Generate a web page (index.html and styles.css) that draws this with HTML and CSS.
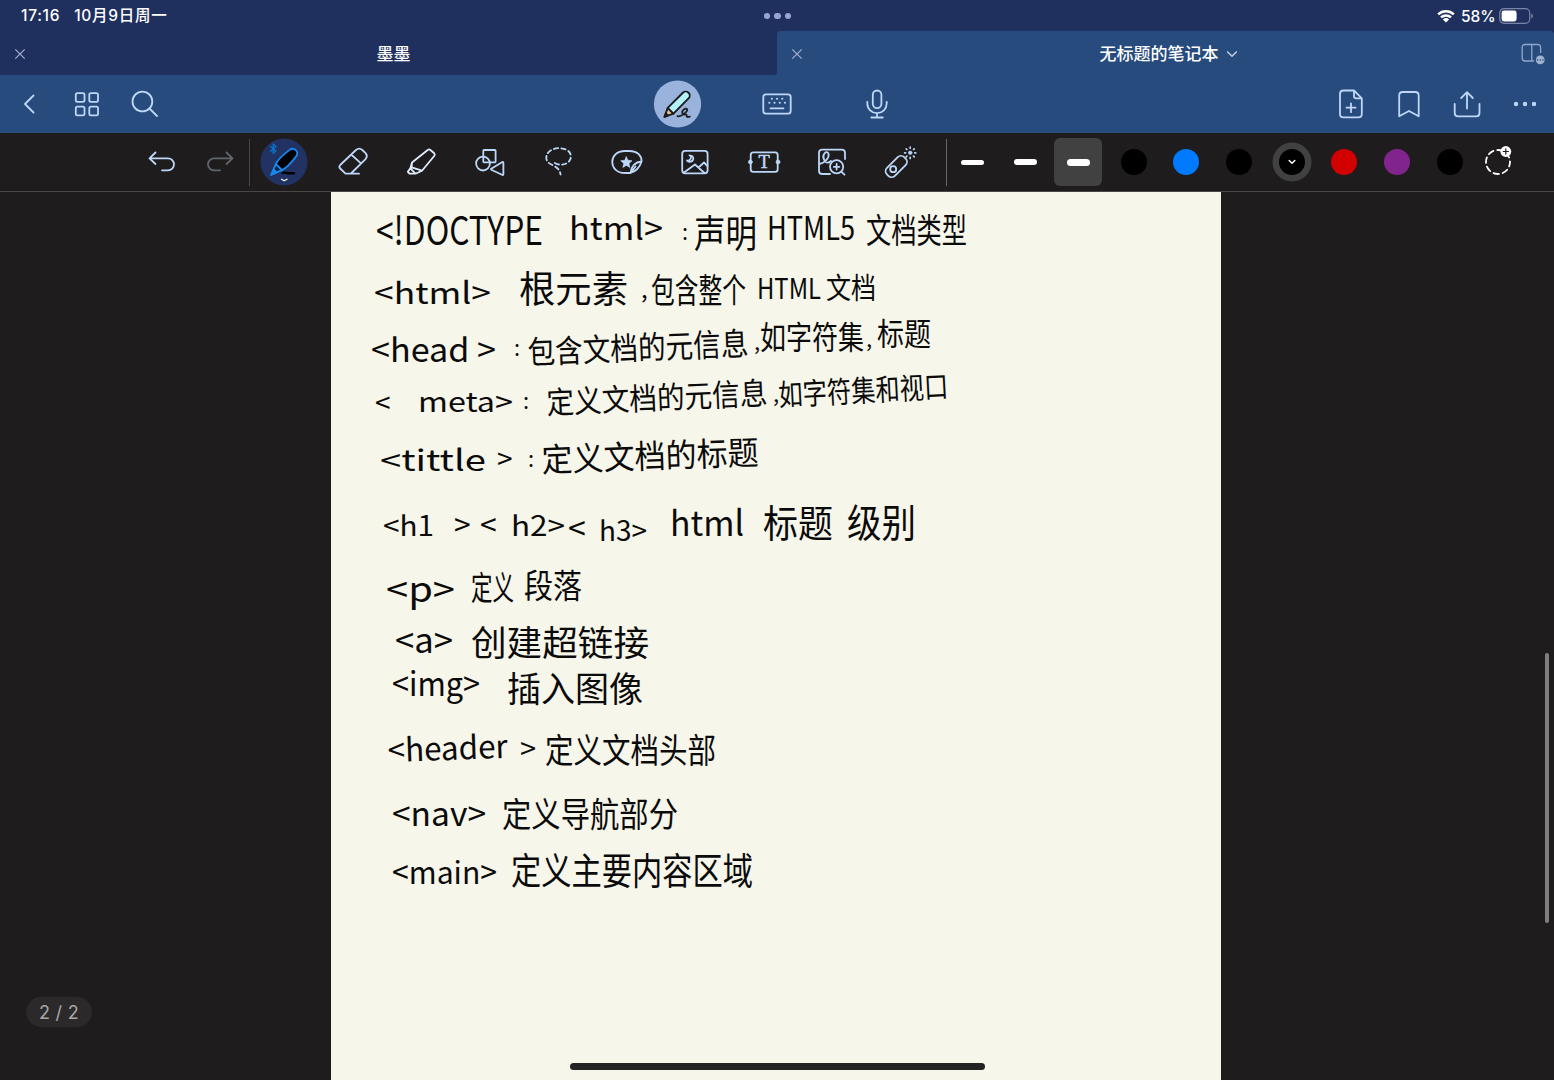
FILE: index.html
```html
<!DOCTYPE html>
<html lang="zh-CN">
<head>
<meta charset="utf-8">
<title>无标题的笔记本</title>
<link rel="stylesheet" href="styles.css">
</head>
<body>
<div class="app">
  <header class="status">
    <div class="status-left"><span class="time">17:16</span><span class="date">10月9日周一</span></div>
    <div class="multitask"><i></i><i></i><i></i></div>
    <div class="status-right">
      <svg class="wifi" viewBox="0 0 18 14"><path d="M1.2 5.3A11.3 11.3 0 0 1 16.8 5.3M4 8.4A7.2 7.2 0 0 1 14 8.4" fill="none" stroke="#fff" stroke-width="2.5"/><path d="M9 13.5L5.9 10.4A4.4 4.4 0 0 1 12.1 10.4Z" fill="#fff"/></svg>
      <span class="percent">58%</span>
      <svg class="battery" viewBox="0 0 35 16"><rect x=".7" y=".7" width="30" height="14.6" rx="4.3" fill="none" stroke="#7983a4" stroke-width="1.2"/><rect x="2.6" y="2.6" width="15" height="10.8" rx="2.4" fill="#fff"/><path d="M32.3 5.5Q34 6.2 34 8T32.3 10.5Z" fill="#7983a4"/></svg>
    </div>
  </header>

  <nav class="tabs">
    <div class="tab">
      <svg class="close" viewBox="0 0 12 12"><path d="M1.3 1.3L10.7 10.7M10.7 1.3L1.3 10.7"/></svg>
      <span class="tab-name">墨墨</span>
    </div>
    <div class="tab tab-active">
      <svg class="close" viewBox="0 0 12 12"><path d="M1.3 1.3L10.7 10.7M10.7 1.3L1.3 10.7"/></svg>
      <span class="tab-name">无标题的笔记本<svg class="caret" viewBox="0 0 12 8"><path d="M1.2 1.5L6 6.2L10.8 1.5"/></svg></span>
      <svg class="split" viewBox="0 0 26 22"><path d="M19.6 10V4.5Q19.6 1.5 16.6 1.5H4.2Q1.2 1.5 1.2 4.5V15Q1.2 18 4.2 18H13M10.8 1.5V18" fill="none" stroke="#8fa8ca" stroke-width="1.3"/><circle cx="19.2" cy="16.9" r="4.4" fill="#a0b2ce"/><path d="M16.5 17h.1M19.2 17h.1M21.9 17h.1" stroke="#284b7e" stroke-width="1.4" stroke-linecap="round"/></svg>
    </div>
  </nav>

  <div class="navbar">
    <div class="nav-left">
      <svg class="icon" viewBox="0 0 48 48"><path d="M28.5 15.5L20 24L28.5 32.5"/></svg>
      <svg class="icon" viewBox="0 0 48 48"><rect x="12.8" y="13.2" width="8.7" height="8.7" rx="1.6"/><rect x="26.3" y="13.2" width="8.7" height="8.7" rx="1.6"/><rect x="12.8" y="26.6" width="8.7" height="8.7" rx="1.6"/><rect x="26.3" y="26.6" width="8.7" height="8.7" rx="1.6"/></svg>
      <svg class="icon" viewBox="0 0 48 48"><circle cx="21.4" cy="21.5" r="9.9"/><path d="M28.5 28.5L36 36"/></svg>
    </div>
    <div class="nav-center">
      <svg class="icon mode-pen" viewBox="0 0 48 48">
        <circle class="disc" cx="24.5" cy="24" r="23.6"/>
        <g transform="translate(11.5 36.8) rotate(-45)" stroke="#1d1b1c" stroke-width="1.9"><path d="M0 0L8.6 -4V4Z" fill="#e8c68c"/><path d="M8.6 -4H30A4 4 0 0 1 30 4H8.6Z" fill="#b5f3fb"/></g>
        <path d="M0 0L3.5 -1.5V1.5Z" transform="translate(11.5 36.8) rotate(-45)" fill="#1d1b1c" stroke="#1d1b1c"/>
        <path d="M24.5 36.2C28 37 35 31.5 34.2 29.3C32.5 27.3 28.5 30.5 29.3 33C30 36.5 33 33 33.7 35C33 37.3 35 37.3 36.8 36.6" stroke="#1d1b1c" stroke-width="1.8"/>
      </svg>
      <svg class="icon" viewBox="0 0 48 48"><rect x="10.3" y="14.3" width="27.4" height="19.3" rx="2.6"/><path d="M17.5 28.3H30.5"/><path stroke-dasharray=".1 5.1" stroke-width="2" d="M18.8 18.8H30M16.3 22.8H33"/></svg>
      <svg class="icon" viewBox="0 0 48 48"><rect x="19.8" y="10.5" width="8.6" height="17.6" rx="4.3"/><path d="M14.3 21.8V23.5A9.7 9.7 0 0 0 33.7 23.5V21.8M24 33.4V37.4M18.3 37.5H29.8"/></svg>
    </div>
    <div class="nav-right">
      <svg class="icon" viewBox="0 0 48 48"><path d="M27 10.5H16.5Q13 10.5 13 14V34Q13 37.4 16.5 37.4H31.3Q34.8 37.4 34.8 34V18.3L27 10.5V16Q27 18.3 29.3 18.3H34.8M24 23.3V32.2M19.5 27.7H28.5"/></svg>
      <svg class="icon" viewBox="0 0 48 48"><path d="M14.2 36.3V15.5Q14.2 12 17.7 12H30.2Q33.7 12 33.7 15.5V36.3L24 31Z"/></svg>
      <svg class="icon" viewBox="0 0 48 48"><path d="M11.7 24V33Q11.7 36.3 15 36.3H33.2Q36.5 36.3 36.5 33V24M24 28.5V12.3M18.2 18L24 12.2L29.8 18"/></svg>
      <svg class="icon dots" viewBox="0 0 48 48"><circle cx="15" cy="24" r="2.2"/><circle cx="24" cy="24" r="2.2"/><circle cx="33" cy="24" r="2.2"/></svg>
    </div>
  </div>

  <div class="toolbar">
    <div class="history">
      <svg class="icon" viewBox="0 0 48 48"><path d="M17.5 14.5L11.5 20.3L17.5 26M12 20.3H30A6 6 0 0 1 30 32.3H24"/></svg>
      <svg class="icon disabled" viewBox="0 0 48 48"><path d="M30.5 14.5L36.5 20.3L30.5 26M36 20.3H18A6 6 0 0 0 18 32.3H24"/></svg>
    </div>
    <div class="tools">
      <svg class="icon tool-pen" viewBox="0 0 48 48">
        <circle class="disc" cx="24" cy="24" r="23.5"/>
        <path d="M22.8 35C26 33.5 26 36 30 35.3H34" stroke="#000" stroke-width="2.4"/>
        <g transform="translate(11.2 36.8) rotate(-45)"><path d="M0 0L11 -4.3V4.3Z" fill="#13233e"/><path d="M11 -4.4C16 -6.2 25 -5.4 31 -4.6A4.7 4.7 0 0 1 31 4.6C25 5.4 16 6.2 11 4.4Z" fill="#000"/></g>
        <path d="M11.3 36.8L13.5 31.5L16.8 34.4Z" fill="#1688f0"/>
        <path class="bluetooth" d="M10.5 8.3L16 13L13.2 15.3V6L16 8.4L10.5 13.2"/>
        <path d="M21.5 41.3L24.2 42.8L27 41.3" stroke="#fff" stroke-width="1.3"/>
      </svg>
      <svg class="icon" viewBox="0 0 48 48"><path d="M30 35.7H16.5L11.2 30.5Q9.5 28.8 11.2 27L27 12Q30.3 9.3 33.3 12L36.6 15.2Q39 18 36.8 20.8L22 35.5M22.7 17L32 25.3"/></svg>
      <svg class="icon pale" viewBox="0 0 48 48"><path d="M15 24.5L31 11.8Q32.3 11 33.4 12L37.2 15.3Q38.3 16.5 37.4 17.7L25 32.7L14.6 29.4ZM15 24.5L13.3 30.4L18.5 35.7L25 32.7M13.3 30.4L10.8 33.8L12.5 35.5L18.5 35.7"/></svg>
      <svg class="icon" viewBox="0 0 48 48"><rect x="17.3" y="12" width="12.3" height="12.3" rx=".7"/><circle cx="17" cy="25.6" r="6.9"/><path d="M25.2 30.8L36 24.2Q37.4 23.6 37.4 25V36.2Q37.2 37.6 36 36.8L25.3 31.7Q24.7 31.2 25.2 30.8Z"/></svg>
      <svg class="icon" viewBox="0 0 48 48"><path stroke-dasharray="4.3 3.2" d="M20.8 25C28 29.2 36.9 25 36.9 18.5C36.9 7 12.3 7.3 12.3 20C12.8 28.5 25.5 26 26.5 36.5"/></svg>
      <svg class="icon" viewBox="0 0 48 48"><path d="M27.5 35H22C5 35 5 13 22 13H26C35.5 13 38.8 18.5 38.6 23.5C36.5 29.8 33 33.5 27.5 35C28.5 28 32.5 24 38.6 23.5M28 34.8L32.5 28.5"/><path class="solid" d="M23.3 18.7L25 22.3L29 22.7L26 25.5L26.9 29.4L23.3 27.4L19.8 29.4L20.7 25.5L17.7 22.7L21.7 22.3Z"/></svg>
      <svg class="icon" viewBox="0 0 48 48"><rect x="11.2" y="12.9" width="25.4" height="22.4" rx="3"/><path d="M18.5 17.3C21.5 18.5 19.5 23.5 16 22.5C17.5 25 22 23.8 22.3 20.8C22.4 19 21 17.5 18.5 17.3ZM13 34.5L24 26.5L33.5 35M27.5 29.5L33 24.5L36.4 28"/></svg>
      <svg class="icon" viewBox="0 0 48 48"><rect x="10.7" y="14.3" width="27" height="19.5" rx="2.6"/><text class="tee" x="24.2" y="30.2" text-anchor="middle">T</text><circle class="solid" cx="10.4" cy="24" r="2"/><circle class="solid" cx="38" cy="24" r="2"/></svg>
      <svg class="icon" viewBox="0 0 48 48"><path d="M37 21V15Q37 11.7 33.7 11.7H14.3Q11 11.7 11 15V33Q11 36 14.3 36H22M11.5 26C17 25 21.5 19.5 20.5 15.7C18.5 11.5 13.5 17 16 21.5C18 26 21 25 23 23"/><circle cx="28.6" cy="28.8" r="6.6"/><path d="M33.3 33.7L36.5 36.7M25.8 28.8H31.4M28.6 26V31.6"/></svg>
      <svg class="icon" viewBox="0 0 48 48"><rect x="-12.2" y="-5.6" width="24.4" height="11.2" rx="4.6" transform="translate(19.3 28.5) rotate(-45)"/><circle cx="16.2" cy="31.2" r="3"/><circle class="solid" cx="33.2" cy="14.8" r="1.8"/><path stroke-width="1.7" d="M33.2 9.2V10.2M33.2 19.4V20.4M27.6 14.8H28.6M37.8 14.8H38.8M29.2 10.8L29.9 11.5M36.5 18.1L37.2 18.8M37.2 10.8L36.5 11.5M29.9 18.1L29.2 18.8"/></svg>
    </div>
    <div class="widths">
      <div class="width-cell"><i class="thin"></i></div>
      <div class="width-cell"><i class="medium"></i></div>
      <div class="width-cell chosen"><i class="thick"></i></div>
    </div>
    <div class="colors">
      <div class="color-cell"><i class="swatch"></i></div>
      <div class="color-cell"><i class="swatch blue"></i></div>
      <div class="color-cell"><i class="swatch"></i></div>
      <div class="color-cell"><i class="swatch picked"><svg viewBox="0 0 8 6"><path d="M1.2 1.5L4 4.2L6.8 1.5"/></svg></i></div>
      <div class="color-cell"><i class="swatch red"></i></div>
      <div class="color-cell"><i class="swatch purple"></i></div>
      <div class="color-cell"><i class="swatch"></i></div>
      <svg class="icon add-color" viewBox="0 0 48 48"><circle cx="24" cy="24" r="12" stroke-dasharray="5.5 3.9" stroke-dashoffset="1"/><circle class="badge" cx="31.8" cy="13.5" r="5.4"/><path d="M29.2 13.5H34.4M31.8 10.9V16.1" stroke="#1e1c1d" stroke-width="1.2"/></svg>
    </div>
  </div>

  <main class="workspace">
    <svg class="paper" viewBox="331 192 890 888">
      <g class="ink">
        <text x="376" y="245" font-size="39" textLength="167" lengthAdjust="spacingAndGlyphs">&lt;!DOCTYPE</text>
        <text x="569" y="240" font-size="32" textLength="94" lengthAdjust="spacingAndGlyphs">html&gt;</text>
        <text x="682" y="240" font-size="22">:</text>
        <text x="694" y="247" font-size="38" textLength="63" lengthAdjust="spacingAndGlyphs">声明</text>
        <text x="767" y="240" font-size="32" textLength="88" lengthAdjust="spacingAndGlyphs">HTML5</text>
        <text x="866" y="243" font-size="34" textLength="101" lengthAdjust="spacingAndGlyphs">文档类型</text>

        <text x="374" y="304" font-size="30" textLength="117" lengthAdjust="spacingAndGlyphs">&lt;html&gt;</text>
        <text x="519" y="303" font-size="37" textLength="109" lengthAdjust="spacingAndGlyphs">根元素</text>
        <text x="641" y="298" font-size="24">,</text>
        <text x="651" y="303" font-size="34" textLength="95" lengthAdjust="spacingAndGlyphs">包含整个</text>
        <text x="757" y="299" font-size="29" textLength="64" lengthAdjust="spacingAndGlyphs">HTML</text>
        <text x="826" y="299" font-size="29" textLength="50" lengthAdjust="spacingAndGlyphs">文档</text>

        <text x="371" y="362" font-size="33" textLength="125" lengthAdjust="spacingAndGlyphs">&lt;head &gt;</text>
        <text x="514" y="356" font-size="22">:</text>
        <text x="528" y="364" font-size="32" textLength="221" lengthAdjust="spacingAndGlyphs" transform="rotate(-2.3 528 364)">包含文档的元信息</text>
        <text x="754" y="350" font-size="22">,</text>
        <text x="760" y="349" font-size="32" textLength="104" lengthAdjust="spacingAndGlyphs">如字符集</text>
        <text x="866" y="347" font-size="22">,</text>
        <text x="877" y="345" font-size="31" textLength="54" lengthAdjust="spacingAndGlyphs">标题</text>

        <text x="375" y="413" font-size="28">&lt;</text>
        <text x="418" y="412" font-size="27" textLength="95" lengthAdjust="spacingAndGlyphs">meta&gt;</text>
        <text x="523" y="409" font-size="22">:</text>
        <text x="547" y="414" font-size="31" textLength="221" lengthAdjust="spacingAndGlyphs" transform="rotate(-2.5 547 414)">定义文档的元信息</text>
        <text x="773" y="402" font-size="22">,</text>
        <text x="779" y="406" font-size="30" textLength="170" lengthAdjust="spacingAndGlyphs" transform="rotate(-3 779 406)">如字符集和视口</text>

        <text x="380" y="471" font-size="29" textLength="106" lengthAdjust="spacingAndGlyphs">&lt;tittle</text>
        <text x="497" y="469" font-size="28">&gt;</text>
        <text x="528" y="467" font-size="22">:</text>
        <text x="542" y="472" font-size="33" textLength="217" lengthAdjust="spacingAndGlyphs" transform="rotate(-2 542 472)">定义文档的标题</text>

        <text x="383" y="536" font-size="28" textLength="51" lengthAdjust="spacingAndGlyphs">&lt;h1</text>
        <text x="454" y="536" font-size="30">&gt;</text>
        <text x="480" y="536" font-size="30">&lt;</text>
        <text x="511" y="536" font-size="28" textLength="54" lengthAdjust="spacingAndGlyphs">h2&gt;</text>
        <text x="568" y="540" font-size="32">&lt;</text>
        <text x="599" y="541" font-size="28" textLength="48" lengthAdjust="spacingAndGlyphs">h3&gt;</text>
        <text x="670" y="536" font-size="35" textLength="74" lengthAdjust="spacingAndGlyphs">html</text>
        <text x="763" y="537" font-size="38" textLength="70" lengthAdjust="spacingAndGlyphs">标题</text>
        <text x="847" y="537" font-size="39" textLength="69" lengthAdjust="spacingAndGlyphs">级别</text>

        <text x="386" y="602" font-size="34" textLength="69" lengthAdjust="spacingAndGlyphs">&lt;p&gt;</text>
        <text x="471" y="600" font-size="33" textLength="43" lengthAdjust="spacingAndGlyphs">定义</text>
        <text x="524" y="598" font-size="33" textLength="58" lengthAdjust="spacingAndGlyphs">段落</text>

        <text x="395" y="653" font-size="34" textLength="58" lengthAdjust="spacingAndGlyphs">&lt;a&gt;</text>
        <text x="471" y="656" font-size="35" textLength="178" lengthAdjust="spacingAndGlyphs">创建超链接</text>

        <text x="392" y="696" font-size="33" textLength="88" lengthAdjust="spacingAndGlyphs">&lt;img&gt;</text>
        <text x="507" y="702" font-size="35" textLength="136" lengthAdjust="spacingAndGlyphs">插入图像</text>

        <text x="388" y="762" font-size="32" textLength="120" lengthAdjust="spacingAndGlyphs" transform="rotate(-2 388 762)">&lt;header</text>
        <text x="520" y="759" font-size="29">&gt;</text>
        <text x="545" y="763" font-size="34" textLength="171" lengthAdjust="spacingAndGlyphs">定义文档头部</text>

        <text x="392" y="826" font-size="33" textLength="94" lengthAdjust="spacingAndGlyphs">&lt;nav&gt;</text>
        <text x="502" y="827" font-size="34" textLength="176" lengthAdjust="spacingAndGlyphs">定义导航部分</text>

        <text x="392" y="884" font-size="31" textLength="105" lengthAdjust="spacingAndGlyphs">&lt;main&gt;</text>
        <text x="511" y="885" font-size="37" textLength="242" lengthAdjust="spacingAndGlyphs">定义主要内容区域</text>
      </g>
    </svg>
    <div class="page-count">2 / 2</div>
    <div class="scroll-thumb"></div>
    <div class="home-indicator"></div>
  </main>
</div>
</body>
</html>
```
FILE: styles.css
```css
* { box-sizing: border-box; }

body {
  margin: 0;
  background: #1e1c1d;
  color: #fff;
  font-family: Inter, "Noto Sans CJK SC", sans-serif;
  overflow: hidden;
}

.app {
  width: 1554px;
  height: 1080px;
  display: flex;
  flex-direction: column;
}

svg { display: block; flex: none; }

.status {
  height: 31px;
  background: #20305e;
  display: grid;
  grid-template-columns: 1fr auto 1fr;
  align-items: center;
  padding: 0 20px 0 21px;
  font-size: 15.5px;
  font-weight: 500;
}
.status-left { display: flex; gap: 14px; white-space: nowrap; line-height: 32px; }
.time { letter-spacing: .7px; }
.date { letter-spacing: .75px; }
.multitask { display: flex; gap: 4px; }
.multitask i { width: 6.5px; height: 6.5px; border-radius: 50%; background: #98a4d4; }
.status-right { display: flex; justify-content: flex-end; align-items: center; }
.wifi { width: 18px; height: 14px; margin-right: 6px; }
.percent { width: 35px; margin-right: 3px; letter-spacing: -.1px; }
.battery { width: 35px; height: 16px; }

.tabs { height: 44px; display: flex; background: #284b7e; }
.tab {
  width: 777px;
  background: #20305e;
  display: grid;
  grid-template-columns: 40px 1fr 40px;
  align-items: center;
  justify-items: center;
  padding-top: 2px;
}
.tab-active {
  background: #284b7e;
  border-radius: 4px 4px 0 0;
  box-shadow: 0 -4px 0 #20305e;
}
.tab:first-child { border-bottom-right-radius: 3px; }
.tab-name {
  grid-column: 2;
  font-size: 17px;
  font-weight: 500;
  line-height: 42px;
  padding-left: 10px;
  display: flex;
  align-items: center;
  gap: 7px;
}
.tab-active .tab-name { padding-left: 6px; }
.close { width: 12px; height: 12px; stroke: #a4b2cb; stroke-width: 1.2; }
.caret { width: 12px; height: 8px; fill: none; stroke: #c4d3ea; stroke-width: 1.4; }
.split { width: 26px; height: 22px; }

.icon {
  width: 48px;
  height: 48px;
  fill: none;
  stroke: #bcd7f8;
  stroke-width: 1.8;
  stroke-linecap: round;
  stroke-linejoin: round;
}
.icon .solid { fill: #bcd7f8; stroke-width: .6; }
.icon .disc { stroke: none; }

.navbar {
  height: 58px;
  background: #284b7e;
  display: grid;
  grid-template-columns: 1fr auto 1fr;
  align-items: center;
  padding: 0 5px;
}
.nav-left, .nav-right { display: flex; gap: 10px; }
.nav-right { justify-content: flex-end; }
.nav-center { display: flex; gap: 52px; }
.mode-pen .disc { fill: #9ab3dc; }
.dots { fill: #bcd7f8; stroke: none; }

.toolbar {
  height: 59px;
  border-bottom: 1px solid #484647;
  display: flex;
  align-items: center;
  padding-left: 138px;
}
.history {
  height: 47px;
  display: flex;
  align-items: center;
  gap: 9.5px;
  padding-right: 5.5px;
  border-right: 1px solid #484647;
}
.disabled { stroke: #61666e; }
.pale { stroke: #dfecfc; }
.tools {
  height: 47px;
  display: flex;
  align-items: center;
  gap: 20.5px;
  padding: 0 21px 0 10.5px;
  border-right: 1px solid #6a6869;
}
.tool-pen { stroke: #1688f0; }
.tool-pen .disc { fill: #223262; }
.tool-pen .bluetooth { stroke: #0972ce; stroke-width: 1.3; }
.tools .icon { margin-left: -.5px; margin-right: .5px; }
.tee { font: 18.5px "Liberation Serif", serif; fill: #bcd7f8; stroke: #bcd7f8; stroke-width: .5; }

.widths { display: flex; gap: 4.2px; margin-left: 1.5px; }
.width-cell {
  width: 48.5px;
  height: 48.5px;
  border-radius: 6px;
  display: flex;
  align-items: center;
  justify-content: center;
}
.width-cell i { width: 23px; border-radius: 4px; background: #fff; }
.width-cell .thin { height: 5px; }
.width-cell .medium { height: 6px; }
.width-cell .thick { height: 7px; }
.chosen { background: #424142; }

.colors { display: flex; align-items: center; margin-left: 5px; }
.color-cell { width: 52.7px; display: flex; justify-content: center; }
.swatch {
  width: 26px;
  height: 26px;
  border-radius: 50%;
  background: #000;
  display: flex;
  align-items: center;
  justify-content: center;
}
.blue { background: #007aff; }
.red { background: #d20000; }
.purple { background: #82248e; }
.picked { box-shadow: 0 0 0 6.5px #424142; }
.picked svg { width: 8px; height: 6px; fill: none; stroke: #fff; stroke-width: 1.5; stroke-linecap: round; }
.add-color { stroke: #fff; margin-left: -2px; }
.add-color .badge { fill: #fff; stroke: none; }

.workspace {
  flex: 1;
  position: relative;
  display: flex;
  padding-left: 331px;
}
.paper { width: 890px; height: 888px; background: #f7f6ea; }
.ink {
  fill: #0b0b0b;
  font-family: "Noto Sans CJK SC", sans-serif;
  font-weight: 400;
}

.page-count {
  position: absolute;
  left: 26px;
  top: 805px;
  width: 66px;
  height: 30px;
  border-radius: 15px;
  background: #2b292a;
  color: #a8a7a8;
  font-size: 18px;
  line-height: 31px;
  text-align: center;
  letter-spacing: .3px;
}
.scroll-thumb {
  position: absolute;
  right: 5px;
  top: 461px;
  width: 4px;
  height: 270px;
  border-radius: 2px;
  background: #807f80;
}
.home-indicator {
  position: absolute;
  left: 569.5px;
  top: 871px;
  width: 415px;
  height: 7px;
  border-radius: 4px;
  background: #242324;
}
```
